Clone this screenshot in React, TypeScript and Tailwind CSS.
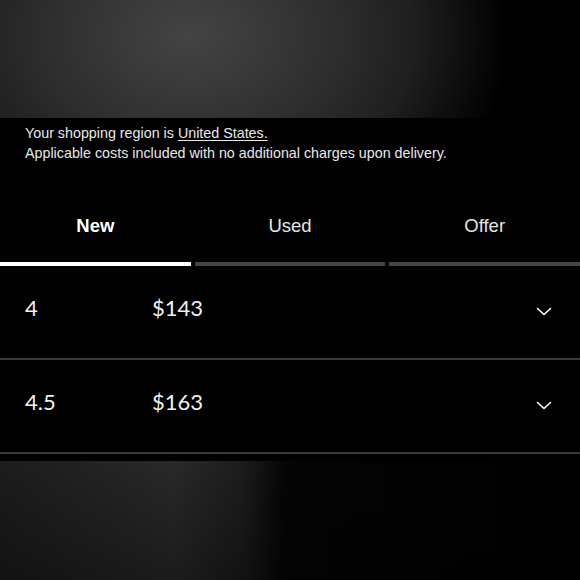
const tabs = ["New", "Used", "Offer"];

const rows = [
  { size: "4", price: "$143" },
  { size: "4.5", price: "$163" },
];

function Chevron() {
  return (
    <svg width="16" height="9" viewBox="0 0 16 9" fill="none" className="mt-[9px] text-white">
      <path d="M1.5 1.5 8 7.5 14.5 1.5" stroke="currentColor" strokeWidth="1.6" strokeLinecap="round" strokeLinejoin="round" />
    </svg>
  );
}

export default function App() {
  return (
    <div className="flex h-[580px] w-[580px] flex-col overflow-hidden bg-black text-white font-['Liberation_Sans',Arial,sans-serif]">
      <div className="h-[118px] shrink-0 bg-[radial-gradient(ellipse_320px_240px_at_190px_35px,#444444_0%,#2e2e2e_45%,#1f1f1f_70%,#000000_100%)]" />

      <div className="px-[25px] pt-[5px] text-[14.3px] leading-[20px] text-[#e8e8e8]">
        <p>
          Your shopping region is <span className="underline underline-offset-2">United States.</span>
        </p>
        <p>Applicable costs included with no additional charges upon delivery.</p>
      </div>

      <div className="mt-[49px] grid grid-cols-3 gap-[4px]">
        {tabs.map((tab, i) => (
          <div key={tab} className="flex flex-col">
            <div className={`h-[50px] text-center text-[18.5px] leading-[28px] ${i === 0 ? "font-bold text-white" : "text-[#e6e6e6]"}`}>
              {tab}
            </div>
            <div className={`h-[4px] ${i === 0 ? "bg-white" : "bg-[#444444]"}`} />
          </div>
        ))}
      </div>

      <div className="font-['Lato',sans-serif]">
        {rows.map((row) => (
          <div key={row.size} className="flex h-[94px] items-center border-b-2 border-[#3a3a3a] pb-[10px] pl-[25px] pr-[28px]">
            <span className="w-[127px] text-[22px] text-[#f0f0f0]">{row.size}</span>
            <span className="flex-1 text-[22px] text-[#f0f0f0]">{row.price}</span>
            <Chevron />
          </div>
        ))}
      </div>

      <div className="mt-[7px] flex-1 bg-[linear-gradient(to_bottom,rgba(0,0,0,0)_0%,rgba(0,0,0,0.35)_100%),linear-gradient(to_right,#1c1c1c_0%,#292929_30%,#1c1c1c_42%,#050505_49%,#000000_100%)]" />
    </div>
  );
}
